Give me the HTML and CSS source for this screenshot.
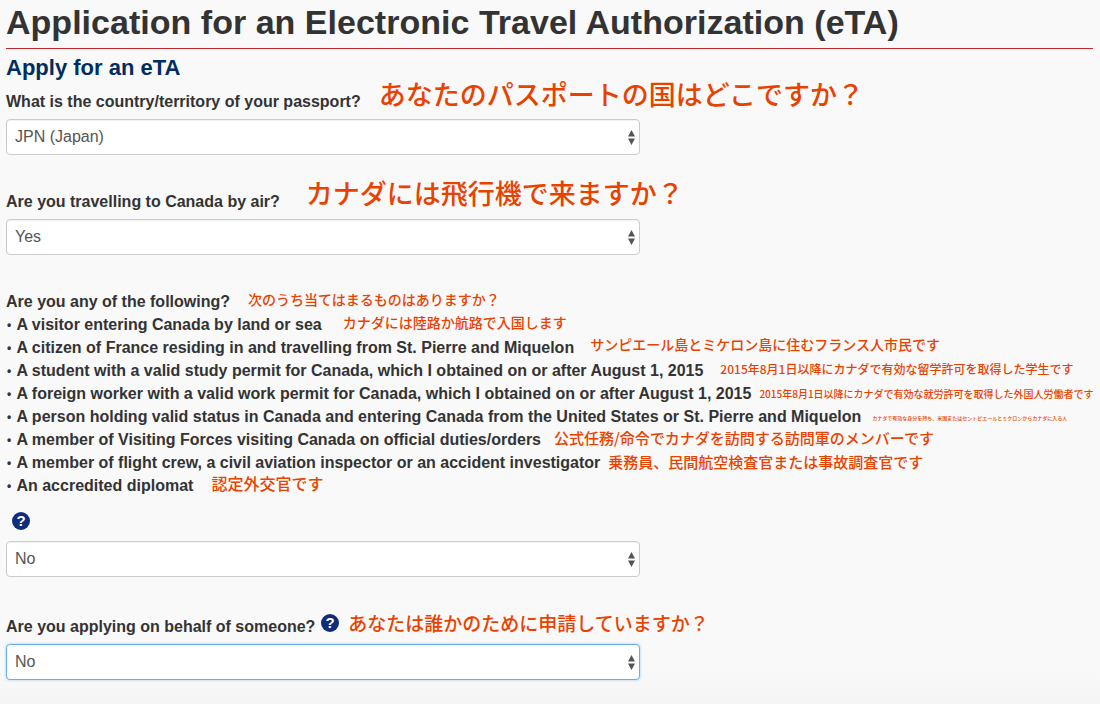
FILE: index.html
```html
<!DOCTYPE html>
<html lang="en">
<head>
<meta charset="utf-8">
<title>Application for an Electronic Travel Authorization (eTA)</title>
<link rel="stylesheet" href="styles.css">
</head>
<body>
<main class="page">
  <h1 class="title">Application for an Electronic Travel Authorization (eTA)</h1>
  <h2 class="subtitle">Apply for an eTA</h2>

  <section class="field field-passport">
    <div class="label-row"><label class="label">What is the country/territory of your passport?</label><span class="jp jp-xl lift-1 gap-18">あなたのパスポートの国はどこですか？</span></div>
    <div class="select"><span>JPN (Japan)</span><svg class="arrows" viewBox="0 0 7 15"><path d="M3.500 0 7 6.500H0zM0 8.500h7L3.500 15z"/></svg></div>
  </section>

  <section class="field field-air">
    <div class="label-row"><label class="label">Are you travelling to Canada by air?</label><span class="jp jp-xl lift-2 gap-26">カナダには飛行機で来ますか？</span></div>
    <div class="select"><span>Yes</span><svg class="arrows" viewBox="0 0 7 15"><path d="M3.500 0 7 6.500H0zM0 8.500h7L3.500 15z"/></svg></div>
  </section>

  <section class="field field-following">
    <ul class="list">
      <li><span class="label">Are you any of the following?</span><span class="jp jp-14 raise-2 gap-18">次のうち当てはまるものはありますか？</span></li>
      <li><span class="label"><span class="bullet">•</span> A visitor entering Canada by land or sea</span><span class="jp jp-14 raise-2 gap-21">カナダには陸路か航路で入国します</span></li>
      <li><span class="label"><span class="bullet">•</span> A citizen of France residing in and travelling from St. Pierre and Miquelon</span><span class="jp jp-14 raise-3 gap-16">サンピエール島とミケロン島に住むフランス人市民です</span></li>
      <li><span class="label"><span class="bullet">•</span> A student with a valid study permit for Canada, which I obtained on or after August 1, 2015</span><span class="jp jp-12 raise-2 gap-17">2015年8月1日以降にカナダで有効な留学許可を取得した学生です</span></li>
      <li><span class="label"><span class="bullet">•</span> A foreign worker with a valid work permit for Canada, which I obtained on or after August 1, 2015</span><span class="jp jp-10 raise-1 gap-8">2015年8月1日以降にカナダで有効な就労許可を取得した外国人労働者です</span></li>
      <li><span class="label"><span class="bullet">•</span> A person holding valid status in Canada and entering Canada from the United States or St. Pierre and Miquelon</span><span class="jp jp-5 raise-2 gap-11">カナダで有効な身分を持ち、米国またはセントピエールとミクロンからカナダに入る人</span></li>
      <li><span class="label"><span class="bullet">•</span> A member of Visiting Forces visiting Canada on official duties/orders</span><span class="jp jp-15 raise-1 gap-13">公式任務/命令でカナダを訪問する訪問軍のメンバーです</span></li>
      <li><span class="label"><span class="bullet">•</span> A member of flight crew, a civil aviation inspector or an accident investigator</span><span class="jp jp-15 raise-0 gap-8">乗務員、民間航空検査官または事故調査官です</span></li>
      <li><span class="label"><span class="bullet">•</span> An accredited diplomat</span><span class="jp jp-16 raise-1 gap-18">認定外交官です</span></li>
    </ul>
    <svg class="help help-alone" viewBox="0 0 18 18"><circle cx="9" cy="9" r="9"/><text x="9" y="14" text-anchor="middle">?</text></svg>
    <div class="select"><span>No</span><svg class="arrows" viewBox="0 0 7 15"><path d="M3.500 0 7 6.500H0zM0 8.500h7L3.500 15z"/></svg></div>
  </section>

  <section class="field field-behalf">
    <div class="label-row"><label class="label">Are you applying on behalf of someone?</label><svg class="help help-inline" viewBox="0 0 18 18"><circle cx="9" cy="9" r="9"/><text x="9" y="14" text-anchor="middle">?</text></svg><span class="jp jp-l lift-1 gap-9">あなたは誰かのために申請していますか？</span></div>
    <div class="select select-focus"><span>No</span><svg class="arrows" viewBox="0 0 7 15"><path d="M3.500 0 7 6.500H0zM0 8.500h7L3.500 15z"/></svg></div>
  </section>
</main>
</body>
</html>
```
FILE: styles.css
```css
* { box-sizing: border-box; }
html, body { margin: 0; height: 100%; }
body {
  background: linear-gradient(#f9f9f9 0, #f9f9f9 670px, #f5f5f5 704px);
  color: #333;
  font-family: "Liberation Sans", "Noto Sans CJK JP", sans-serif;
  overflow: hidden;
}
.page { padding: 0 7px 0 6px; height: 704px; }
.title {
  margin: 0;
  height: 49px;
  padding-top: 3px;
  font-size: 34px;
  line-height: 39px;
  font-weight: 700;
  letter-spacing: .02px;
  border-bottom: 1px solid #c1272d;
}
.subtitle {
  margin: 7px 0 0;
  font-size: 22px;
  line-height: 24px;
  font-weight: 700;
  color: #002d62;
}
.label { font-size: 16px; font-weight: 700; white-space: nowrap; }
.bullet {
  display: inline-block;
  width: 6.600px;
  padding-left: 1px;
  font-size: 12px;
  line-height: 0;
  vertical-align: 1.500px;
}
.label-row { display: flex; align-items: flex-end; height: 29px; margin-bottom: 8px; }
.jp { color: #e94200; font-family: "Noto Sans CJK JP", "Liberation Sans", sans-serif; white-space: nowrap; font-weight: 500; }
.jp-xl { font-size: 27px; line-height: 32px; }
.jp-l { font-size: 19px; line-height: 24px; }
.jp-16 { font-size: 16px; }
.jp-15 { font-size: 15px; }
.jp-14 { font-size: 14px; }
.jp-12 { font-size: 12px; }
.jp-10 { font-size: 10px; }
.jp-5 { font-size: 5px; }
.lift-1 { margin-bottom: 1px; }
.lift-2 { margin-bottom: 2px; }
.raise-0 { vertical-align: 0; }
.raise-1 { vertical-align: 1px; }
.raise-2 { vertical-align: 2px; }
.raise-3 { vertical-align: 3px; }
.gap-8 { margin-left: 8px; }
.gap-9 { margin-left: 9px; }
.gap-11 { margin-left: 11px; }
.gap-13 { margin-left: 13px; }
.gap-16 { margin-left: 16px; }
.gap-17 { margin-left: 17px; }
.gap-18 { margin-left: 18px; }
.gap-21 { margin-left: 21px; }
.gap-26 { margin-left: 26px; }
.select {
  width: 634px;
  height: 36px;
  display: flex;
  align-items: center;
  justify-content: space-between;
  padding: 0 4px 0 8px;
  background: #fff;
  border: 1px solid #ccc;
  border-radius: 4px;
  font-size: 16px;
  color: #555;
  box-shadow: inset 0 1px 1px rgba(0,0,0,.06);
}
.select-focus {
  border-color: #66afe9;
  box-shadow: 0 0 3px rgba(102,175,233,.6);
}
.arrows { width: 7px; height: 15px; fill: #555; }
.field-passport { margin-top: 2px; }
.field-air { margin-top: 27px; }
.field-following { margin-top: 35px; }
.field-behalf { margin-top: 30px; }
.list { list-style: none; margin: 0; padding: 0; }
.list li { height: 23px; line-height: 23px; white-space: nowrap; }
.list .jp { line-height: 0; }
.help { display: block; width: 18px; height: 18px; fill: #0f2d7a; }
.help text { fill: #fff; font-size: 15px; font-weight: 700; font-family: "Liberation Sans", sans-serif; }
.help-alone { margin: 15px 0 11px 6px; }
.help-inline { margin: 0 0 4px 6px; flex: none; }
```
